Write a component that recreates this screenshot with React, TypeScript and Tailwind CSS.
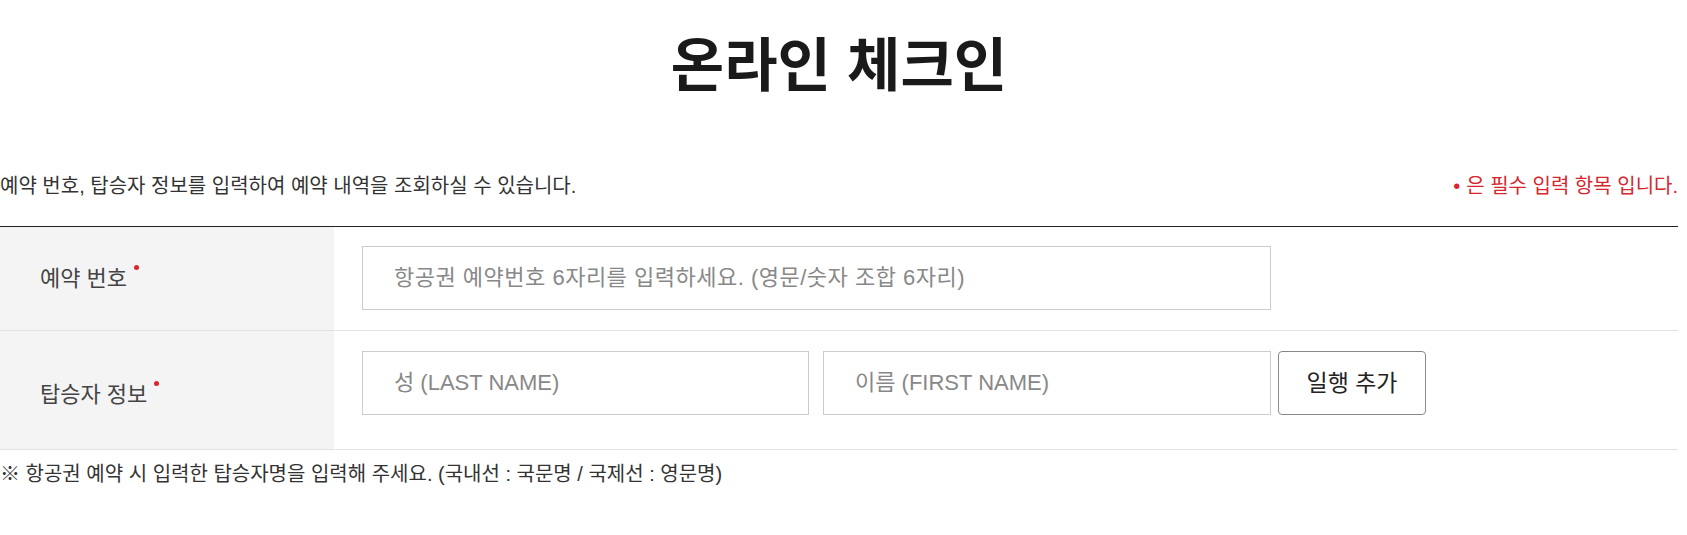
import React from "react";

const FONT = "font-['Liberation_Sans','Noto_Sans_CJK_KR',sans-serif]";

function Req() {
  return (
    <span className="ml-[7px] inline-block h-[5px] w-[5px] -translate-y-[11px] rounded-full bg-[#d7262d] align-middle" />
  );
}

export default function App() {
  return (
    <div className={`w-[1678px] bg-white text-[#333] ${FONT}`}>
      <div className="flex h-[131px] items-center justify-center">
        <h1 className="text-[58px] font-bold leading-none text-[#1a1a1a]">
          온라인 체크인
        </h1>
      </div>

      <div className="mt-[35px] flex h-[40px] items-center justify-between text-[20px] text-[#333]">
        <p>예약 번호, 탑승자 정보를 입력하여 예약 내역을 조회하실 수 있습니다.</p>
        <p className="text-[#d7262d]">
          <span className="mr-[6px]">•</span>은 필수 입력 항목 입니다.
        </p>
      </div>

      <div className="mt-[20px] border-t border-[#222]">
        <div className="grid grid-cols-[334px_1fr] border-b border-[#e2e2e2]">
          <div className="flex items-center bg-[#f4f4f4] pl-[40px] text-[22px] text-[#444]">
            <span>예약 번호</span>
            <Req />
          </div>
          <div className="pl-[28px] pt-[19px] pb-[20px]">
            <input
              className="h-[64px] w-[909px] border border-[#cccccc] px-[31px] text-[22px] tracking-[0.5px] text-[#333] outline-none placeholder:text-[#888]"
              placeholder="항공권 예약번호 6자리를 입력하세요. (영문/숫자 조합 6자리)"
            />
          </div>
        </div>

        <div className="grid grid-cols-[334px_1fr] border-b border-[#e2e2e2]">
          <div className="flex items-center bg-[#f4f4f4] pl-[40px] pt-[8px] text-[22px] text-[#444]">
            <span>탑승자 정보</span>
            <Req />
          </div>
          <div className="flex items-start pl-[28px] pt-[20px] pb-[34px]">
            <input
              className="h-[64px] w-[447px] border border-[#cccccc] px-[31px] text-[22px] text-[#333] outline-none placeholder:text-[#888]"
              placeholder="성 (LAST NAME)"
            />
            <input
              className="ml-[14px] h-[64px] w-[448px] border border-[#cccccc] px-[31px] text-[22px] text-[#333] outline-none placeholder:text-[#888]"
              placeholder="이름 (FIRST NAME)"
            />
            <button className="ml-[7px] h-[64px] w-[148px] rounded-[4px] border border-[#888] bg-white text-[23px] text-[#222]">
              일행 추가
            </button>
          </div>
        </div>
      </div>

      <div className="mt-[4px] flex h-[40px] items-center text-[20px] text-[#333]">
        <p>※ 항공권 예약 시 입력한 탑승자명을 입력해 주세요. (국내선 : 국문명 / 국제선 : 영문명)</p>
      </div>
      <div className="h-[42px]" />
    </div>
  );
}
